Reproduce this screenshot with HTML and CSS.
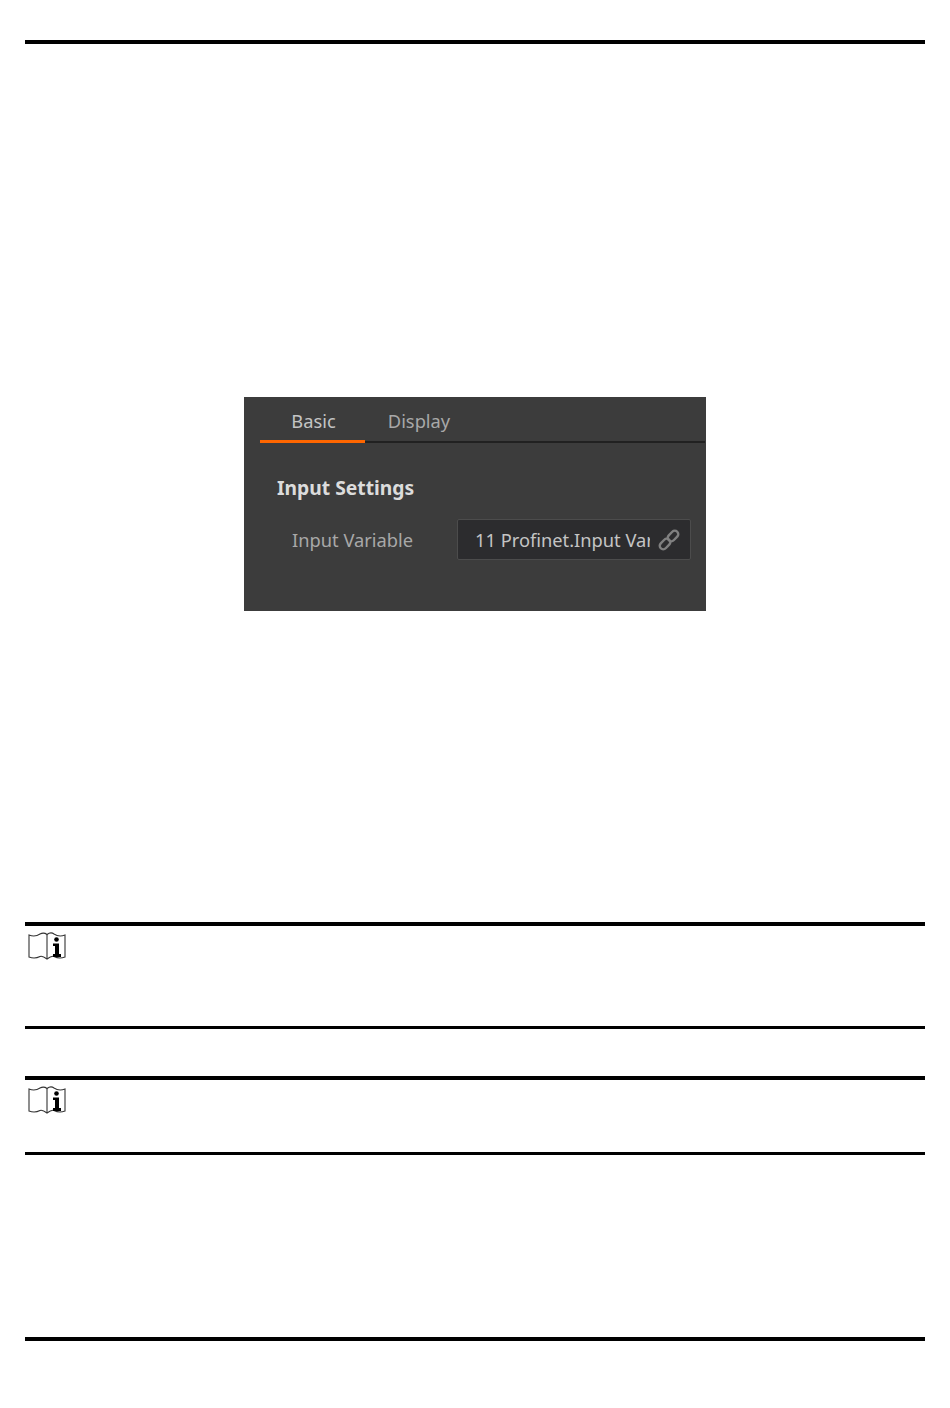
FILE: index.html
```html
<!DOCTYPE html>
<html lang="en">
<head>
  <meta charset="UTF-8">
  <title>Input Settings</title>
  <link rel="stylesheet" href="styles.css">
</head>
<body>
  <div class="page">
    <div class="rule"></div>

    <div class="figure">
      <div class="panel">
        <div class="tabs">
          <div class="tab active">Basic</div>
          <div class="tab">Display</div>
        </div>
        <h3 class="section-title">Input Settings</h3>
        <div class="field">
          <span class="field-label">Input Variable</span>
          <div class="field-box">
            <span class="field-value">11 Profinet.Input Variable</span>
            <svg class="link-icon" viewBox="0 0 22 22" width="22" height="22" fill="none" stroke="#808080" stroke-width="2.400">
              <rect x="9" y="3.500" width="12" height="7" rx="3.500" transform="rotate(-45 15 7)"/>
              <rect x="1" y="11.500" width="12" height="7" rx="3.500" transform="rotate(-45 7 15)"/>
            </svg>
          </div>
        </div>
      </div>
    </div>

    <div class="note note-tall">
      <svg class="note-icon" viewBox="0 0 38 28" width="38" height="28" fill="none" stroke="#333" stroke-width="1.100">
        <path d="M1 3C5 4.500 9 4 12 2C14 1 17 1 19 2.500C21 1 24 .5 26 2C29 4 33 4.500 37 3V25C33 26.500 29 26 26 24.500C24 23.500 21 25.500 19 27C17 25.500 14 23.500 12 24.500C9 26 5 26.500 1 25Z"/>
        <path d="M19 2.500V27"/>
        <circle cx="28.500" cy="7.500" r="2.300" fill="#000" stroke="none"/>
        <path d="M25 11.500H31V22H33V25H25V22H27V14H25Z" fill="#000" stroke="none"/>
      </svg>
    </div>

    <div class="note note-short">
      <svg class="note-icon" viewBox="0 0 38 28" width="38" height="28" fill="none" stroke="#333" stroke-width="1.100">
        <path d="M1 3C5 4.500 9 4 12 2C14 1 17 1 19 2.500C21 1 24 .5 26 2C29 4 33 4.500 37 3V25C33 26.500 29 26 26 24.500C24 23.500 21 25.500 19 27C17 25.500 14 23.500 12 24.500C9 26 5 26.500 1 25Z"/>
        <path d="M19 2.500V27"/>
        <circle cx="28.500" cy="7.500" r="2.300" fill="#000" stroke="none"/>
        <path d="M25 11.500H31V22H33V25H25V22H27V14H25Z" fill="#000" stroke="none"/>
      </svg>
    </div>

    <div class="rule rule-last"></div>
  </div>
</body>
</html>
```

FILE: styles.css
```css
* {
  box-sizing: border-box;
  margin: 0;
  padding: 0;
}

body {
  background-color: #fff;
  font-family: "Noto Sans", "Open Sans", sans-serif;
}

.page {
  padding: 40px 25px 0;
}

.rule {
  height: 4px;
  background-color: #000;
}

.rule-last {
  margin-top: 182px;
}

.figure {
  display: flex;
  justify-content: center;
  padding: 353px 0 311px;
}

.panel {
  width: 462px;
  height: 214px;
  padding: 0 1px 0 16px;
  background-color: #3c3c3c;
}

.tabs {
  display: flex;
  height: 46px;
  border-bottom: 2px solid #212121;
}

.tab {
  width: 105px;
  height: 46px;
  padding-top: 11px;
  text-align: center;
  font-size: 18.3px;
  line-height: 25px;
  color: #a8a8a8;
}

.tab.active {
  padding-left: 2px;
  border-bottom: 3px solid #ff6600;
  color: #c4c4c4;
}

.tab + .tab {
  width: 108px;
}

.section-title {
  margin: 32px 0 0 17px;
  font-size: 19.3px;
  line-height: 26px;
  font-weight: 700;
  color: #dcdcdc;
}

.field {
  display: flex;
  align-items: center;
  margin-top: 18px;
  padding-left: 32px;
}

.field-label {
  width: 165px;
  font-size: 18.3px;
  color: #a8a8a8;
}

.field-box {
  display: flex;
  align-items: center;
  width: 234px;
  height: 41px;
  padding: 0 10px 0 17px;
  background-color: #2c2c2e;
  border: 1px solid #4c4c4c;
  border-radius: 2px;
}

.field-value {
  flex: 1;
  overflow: hidden;
  white-space: nowrap;
  font-size: 18.3px;
  color: #c4c4c4;
}

.link-icon {
  flex: none;
  margin-left: 8px;
}

.note {
  border-top: 4px solid #000;
  border-bottom: 3px solid #000;
  padding: 6px 0 0 3px;
}

.note-icon {
  display: block;
}

.note-tall {
  height: 107px;
}

.note-short {
  height: 79px;
  margin-top: 47px;
}
```
